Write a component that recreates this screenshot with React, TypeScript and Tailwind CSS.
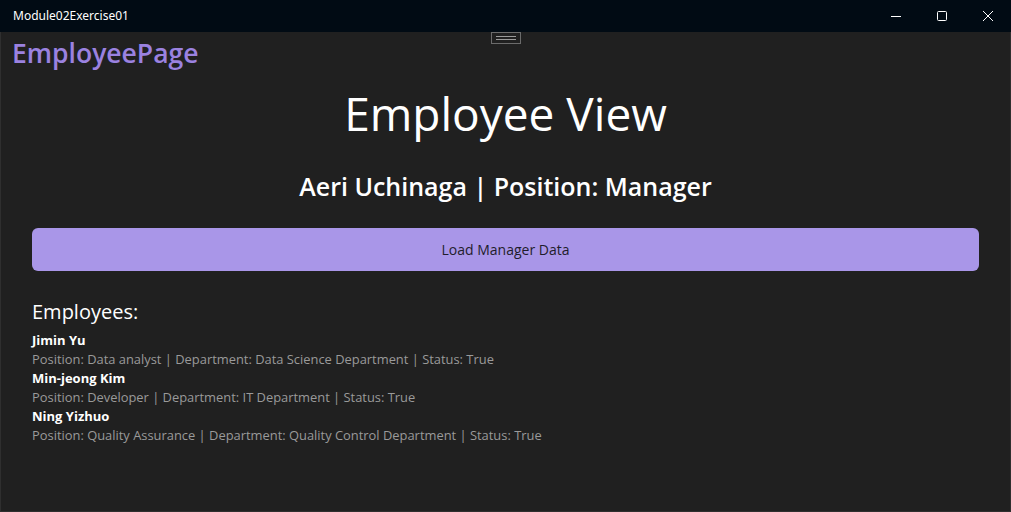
const FONT = { fontFamily: '"Open Sans", "Noto Sans", sans-serif' };

const employees = [
  { name: "Jimin Yu", position: "Data analyst", department: "Data Science Department", status: "True" },
  { name: "Min-jeong Kim", position: "Developer", department: "IT Department", status: "True" },
  { name: "Ning Yizhuo", position: "Quality Assurance", department: "Quality Control Department", status: "True" },
];

function TitleBar() {
  return (
    <div className="flex h-[32px] items-center justify-between bg-[#010b14] text-white">
      <span className="pl-[13px] text-[12px]" style={{ fontFamily: '"Noto Sans", sans-serif' }}>
        Module02Exercise01
      </span>
      <div className="flex h-full items-center">
        <div className="grid h-full w-[46px] place-items-center">
          <svg width="10" height="10" viewBox="0 0 10 10">
            <path d="M0 5.5h10" stroke="#fff" strokeWidth="1" />
          </svg>
        </div>
        <div className="grid h-full w-[46px] place-items-center">
          <svg width="10" height="10" viewBox="0 0 10 10">
            <rect x="0.5" y="0.5" width="9" height="9" rx="1" fill="none" stroke="#fff" strokeWidth="1" />
          </svg>
        </div>
        <div className="grid h-full w-[46px] place-items-center">
          <svg width="10" height="10" viewBox="0 0 10 10">
            <path d="M0 0L10 10M10 0L0 10" stroke="#fff" strokeWidth="1" />
          </svg>
        </div>
      </div>
    </div>
  );
}

export default function App() {
  return (
    <div className="flex h-[512px] w-[1011px] flex-col overflow-hidden bg-[#202020]" style={FONT}>
      <TitleBar />
      <div className="relative flex flex-1 flex-col border-x border-b border-[#2f2f2f]">
        {/* drag handle */}
        <div className="absolute left-[490px] top-0 flex h-[12px] w-[30px] flex-col items-center justify-center gap-[2px] border border-[#6b6b6b]">
          <div className="h-px w-[20px] bg-[#9a9a9a]" />
          <div className="h-px w-[20px] bg-[#9a9a9a]" />
        </div>

        <div className="pl-[11px] pt-[3px] text-[26.5px] font-semibold leading-[36px] text-[#9b82e0]">EmployeePage</div>

        <h1 className="mt-[14px] text-center text-[46px] leading-[56px] text-white">Employee View</h1>
        <h2 className="mt-[29px] text-center text-[25px] font-semibold leading-[32px] text-white">
          Aeri Uchinaga | Position: Manager
        </h2>

        <div className="mx-[31px] mt-[26px] flex h-[43px] items-center justify-center rounded-[6px] bg-[#a996e8] text-[14px] text-[#1f1d2b]">
          Load Manager Data
        </div>

        <div className="mt-[27px] pl-[31px]">
          <div className="text-[20px] leading-[28px] text-white">Employees:</div>
          <div className="mt-[5px] flex flex-col">
            {employees.map((e) => (
              <div key={e.name} className="flex flex-col">
                <span className="text-[13px] font-bold leading-[19px] text-white">{e.name}</span>
                <span className="text-[12.9px] leading-[19px] text-[#9a9a9a]">
                  Position: {e.position} | Department: {e.department} | Status: {e.status}
                </span>
              </div>
            ))}
          </div>
        </div>
      </div>
    </div>
  );
}
